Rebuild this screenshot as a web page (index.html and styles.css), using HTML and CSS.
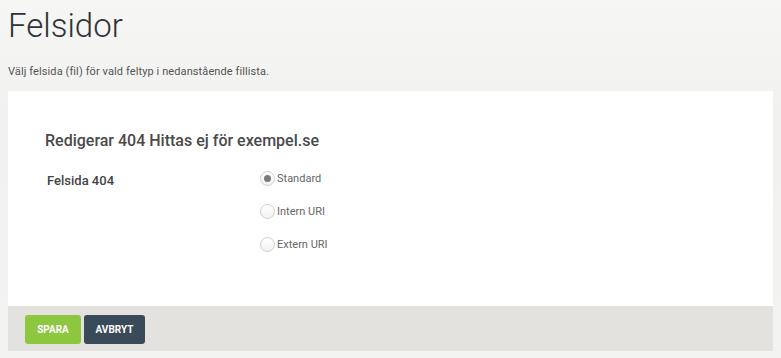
FILE: index.html
```html
<!DOCTYPE html>
<html>
<head>
	<meta http-equiv="Content-Type" content="text/html; charset=utf-8" />
	<title>Felsidor</title>
	<link rel="stylesheet" href="styles.css">
</head>
<body>
	<div class="sida">
		<h1 class="rubrik">Felsidor</h1>
		<p class="ingress">Välj felsida (fil) för vald feltyp i nedanstående fillista.</p>

		<form class="panel">
			<div class="panel_innehall">
				<h2 class="panel_rubrik">Redigerar 404 Hittas ej för exempel.se</h2>
				<div class="falt">
					<label class="falt_namn">Felsida 404</label>
					<div class="val">
						<label class="val_rad"><input type="radio" name="typ" checked> Standard</label>
						<label class="val_rad"><input type="radio" name="typ"> Intern URI</label>
						<label class="val_rad"><input type="radio" name="typ"> Extern URI</label>
					</div>
				</div>
			</div>
			<div class="panel_fot">
				<button type="button" class="knapp knapp_spara">SPARA</button>
				<button type="button" class="knapp knapp_avbryt">AVBRYT</button>
			</div>
		</form>
	</div>
</body>
</html>
```

FILE: styles.css
```css
body {
	margin: 0;
	font-family: Roboto, "Open Sans", Arial, sans-serif;
	color: #555555;
	background: linear-gradient(#f6f6f4, #f1f1ef 120px, #f3f3f1);
	min-height: 358px;
}

.sida {
	padding: 0 8px 0 8px;
}

.rubrik {
	margin: 0;
	padding-top: 6px;
	font-size: 33px;
	font-weight: 300;
	line-height: 40px;
	color: #2f3236;
}

.ingress {
	margin: 18px 0 0 0;
	font-size: 11px;
	line-height: 15px;
	letter-spacing: 0.1px;
	color: #555555;
}

.panel {
	margin-top: 12px;
	background-color: #ffffff;
}

.panel_innehall {
	padding: 39px 37px 53px 37px;
}

.panel_rubrik {
	margin: 0;
	font-size: 16px;
	font-weight: 500;
	line-height: 22px;
	color: #4a4a4a;
}

.falt {
	display: flex;
	margin-top: 18px;
}

.falt_namn {
	width: 213px;
	padding-left: 2px;
	padding-top: 2px;
	font-size: 13px;
	font-weight: 500;
	line-height: 17px;
	color: #444444;
}

.val {
	display: flex;
	flex-direction: column;
	gap: 16px;
}

.val_rad {
	display: flex;
	align-items: center;
	font-size: 11px;
	line-height: 17px;
	color: #666666;
}

.val_rad input {
	appearance: none;
	-webkit-appearance: none;
	box-sizing: border-box;
	margin: 0 2px 0 0;
	width: 15px;
	height: 15px;
	border: 1px solid #cfcfcf;
	border-radius: 50%;
	background: linear-gradient(#ffffff, #f2f2f2);
	display: flex;
	align-items: center;
	justify-content: center;
}

.val_rad input:checked::after {
	content: "";
	width: 7px;
	height: 7px;
	border-radius: 50%;
	background-color: #7a7a7a;
}

.panel_fot {
	display: flex;
	gap: 3px;
	padding: 9px 17px 7px 17px;
	height: 29px;
	box-sizing: content-box;
	background-color: #e3e2df;
}

.knapp {
	height: 29px;
	border: none;
	border-radius: 3px;
	font-family: inherit;
	font-size: 10px;
	font-weight: bold;
	color: #ffffff;
	padding: 0;
}

.knapp_spara {
	width: 56px;
	background-color: #8dc63f;
}

.knapp_avbryt {
	width: 61px;
	background-color: #394a59;
}
```
